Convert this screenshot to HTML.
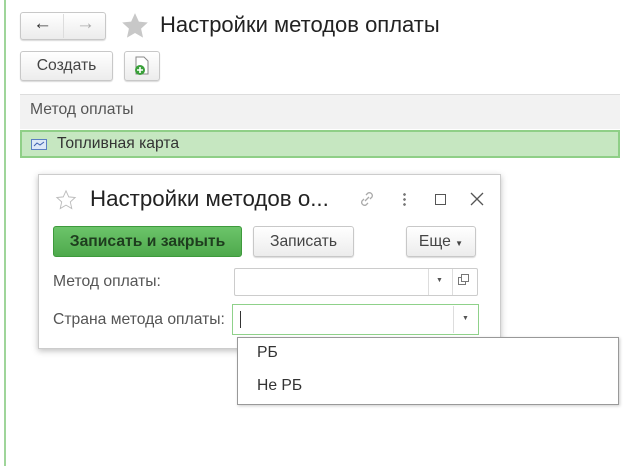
<!DOCTYPE html>
<html><head><meta charset="utf-8"><style>
*{box-sizing:border-box;margin:0;padding:0}
body{width:640px;height:471px;background:#fff;font-family:"Liberation Sans",sans-serif;color:#333;position:relative;overflow:hidden;font-size:15.7px}
.a{position:absolute}
.btn{position:absolute;border:1px solid #c8c8c8;border-radius:3px;background:linear-gradient(#fff,#ececec);box-shadow:0 1px 1px rgba(0,0,0,.15);text-align:center;color:#444}
</style></head><body>
<div class="a" style="left:4px;top:0;width:2px;height:466px;background:#9fd59a"></div>
<div class="btn" style="left:20px;top:12px;width:86px;height:28px"></div>
<div class="a" style="left:63px;top:14px;width:1px;height:24px;background:#ddd"></div>
<div class="a" style="left:33px;top:13px;font-size:19px;color:#333;font-weight:bold">←</div>
<div class="a" style="left:76px;top:13px;font-size:19px;color:#aaa;font-weight:bold">→</div>
<svg class="a" style="left:121px;top:12px" width="28" height="28" viewBox="0 0 24 24"><path d="M12 1l3.3 7.2 7.7.8-5.8 5.2 1.7 7.8L12 18l-6.9 4 1.7-7.8L1 9l7.7-.8z" fill="#c8c8c8"/></svg>
<div class="a" style="left:160px;top:12px;font-size:22px;color:#222">Настройки методов оплаты</div>
<div class="btn" style="left:20px;top:51px;width:93px;height:30px;line-height:28px">Создать</div>
<div class="btn" style="left:124px;top:51px;width:36px;height:30px"></div>
<svg class="a" style="left:133px;top:56px" width="18" height="20"><path d="M3 1h8l4 4v13H3z" fill="#fff" stroke="#888"/><circle cx="7" cy="14" r="5" fill="#3aa03a"/><path d="M7 11v6M4 14h6" stroke="#fff" stroke-width="1.6"/></svg>
<div class="a" style="left:20px;top:94px;width:600px;height:35px;background:#f2f2f2;border-top:1px solid #ddd"></div>
<div class="a" style="left:30px;top:101px;color:#555">Метод оплаты</div>
<div class="a" style="left:20px;top:130px;width:600px;height:28px;background:#c6e7c1;border:2px solid #8fcf87"></div>
<svg class="a" style="left:31px;top:139px" width="16" height="11"><rect x=".5" y=".5" width="15" height="10" fill="#dde8f7" stroke="#5b7fc2"/><path d="M3 7l3-3 3 2 4-3" stroke="#3b5fb0" fill="none"/></svg>
<div class="a" style="left:57px;top:135px;color:#333">Топливная карта</div>

<div class="a" style="left:38px;top:174px;width:463px;height:175px;background:#fff;border:1px solid #ccc;box-shadow:0 2px 6px rgba(0,0,0,.25)"></div>
<svg class="a" style="left:55px;top:189px" width="22" height="22" viewBox="0 0 24 24"><path d="M12 2l3 6.6 7 .7-5.3 4.8 1.6 7.2L12 17.6l-6.3 3.7 1.6-7.2L2 9.3l7-.7z" fill="none" stroke="#bbb"/></svg>
<div class="a" style="left:90px;top:186px;font-size:22.3px;color:#222">Настройки методов о...</div>
<svg class="a" style="left:358px;top:190px" width="18" height="18"><path d="M7 11l4-4M8 5l2-2a3 3 0 014 4l-2 2M10 13l-2 2a3 3 0 01-4-4l2-2" stroke="#aaa" fill="none" stroke-width="1.3"/></svg>
<div class="a" style="left:403px;top:192px;width:3px;height:14px;background:radial-gradient(circle,#777 1.2px,transparent 1.5px) 0 0/3px 5px"></div>
<div class="a" style="left:435px;top:194px;width:11px;height:11px;border:1px solid #555"></div>
<svg class="a" style="left:470px;top:192px" width="14" height="14"><path d="M1 1l12 12M13 1L1 13" stroke="#555" stroke-width="1.3"/></svg>
<div class="a" style="left:53px;top:226px;width:189px;height:31px;background:linear-gradient(#6cc46a,#4ea94c);border:1px solid #3e9a3c;border-radius:3px;text-align:center;line-height:29px;font-weight:bold;color:#1e3d1e">Записать и закрыть</div>
<div class="btn" style="left:253px;top:226px;width:101px;height:31px;line-height:29px">Записать</div>
<div class="btn" style="left:406px;top:226px;width:70px;height:31px;line-height:29px">Еще <span style="font-size:8px">▼</span></div>
<div class="a" style="left:53px;top:273px;color:#555">Метод оплаты:</div>
<div class="a" style="left:234px;top:268px;width:244px;height:28px;border:1px solid #ccc;border-radius:2px"></div>
<div class="a" style="left:428px;top:269px;width:1px;height:26px;background:#ddd"></div>
<div class="a" style="left:452px;top:269px;width:1px;height:26px;background:#ddd"></div>
<div class="a" style="left:436px;top:277px;font-size:7px;color:#555">▼</div>
<div class="a" style="left:458px;top:277px;width:8px;height:8px;border:1px solid #777"></div>
<div class="a" style="left:461px;top:274px;width:8px;height:8px;border:1px solid #777;background:#fff"></div>
<div class="a" style="left:53px;top:311px;color:#555">Страна метода оплаты:</div>
<div class="a" style="left:232px;top:304px;width:247px;height:31px;border:1px solid #8fd18a"></div>
<div class="a" style="left:240px;top:311px;width:1px;height:17px;background:#333"></div>
<div class="a" style="left:453px;top:306px;width:1px;height:27px;background:#ddd"></div>
<div class="a" style="left:462px;top:315px;font-size:7px;color:#555">▼</div>

<div class="a" style="left:237px;top:337px;width:382px;height:68px;background:#fff;border:1px solid #999;box-shadow:1px 1px 3px rgba(0,0,0,.2)"></div>
<div class="a" style="left:257px;top:344px;color:#333">РБ</div>
<div class="a" style="left:257px;top:377px;color:#333">Не РБ</div>
</body></html>
